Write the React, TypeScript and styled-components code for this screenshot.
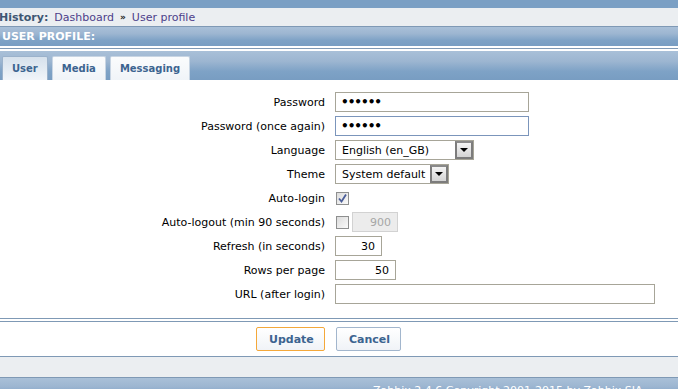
import React, { FC } from 'react';
import styled, { createGlobalStyle } from 'styled-components';

const GlobalStyle = createGlobalStyle`
  html, body {
    margin: 0;
    padding: 0;
    background: #ffffff;
    overflow: hidden;
  }
  body {
    font-family: "DejaVu Sans", Verdana, sans-serif;
    font-size: 11px;
    color: #000;
  }
`;

const blueGradient = 'linear-gradient(to bottom, #a9c0d8 0%, #9db6d1 35%, #7ea2c6 70%, #789dc2 100%)';

const SPage = styled.div`
  width: 678px;
  display: flex;
  flex-direction: column;
  & > * {
    flex-shrink: 0;
  }
`;

const STopBar = styled.div`
  height: 8px;
  background: #7a9fc4;
`;

const SHistory = styled.div`
  height: 18px;
  background: #ebeef1;
  border-bottom: 1px solid #7f99b5;
  display: flex;
  align-items: center;
  gap: 6px;
  white-space: nowrap;
`;

const SHistoryLabel = styled.span`
  font-weight: bold;
  color: #3e5673;
  margin-left: -1px;
`;

const SCrumb = styled.span`
  color: #4d3f8a;
`;

const SSep = styled.span`
  color: #222;
  font-size: 9px;
  font-weight: bold;
`;

const SHeader = styled.div`
  height: 19px;
  background: ${blueGradient};
  color: #fff;
  font-weight: bold;
  display: flex;
  align-items: center;
  padding-left: 2px;
`;

const SSpacerLine = styled.div`
  height: 5px;
  background: #fff;
  display: flex;
  align-items: center;
  &::after {
    content: '';
    display: block;
    width: 100%;
    height: 1px;
    margin-top: -1px;
    background: #7f99b5;
  }
`;

const STabBar = styled.div`
  height: 29px;
  background: ${blueGradient};
  display: flex;
  align-items: flex-end;
  gap: 4px;
  padding-left: 2px;
`;

const STab = styled.div<{ $active?: boolean }>`
  height: 24px;
  box-sizing: border-box;
  padding: 0 9px;
  display: flex;
  align-items: center;
  font-size: 10px;
  font-weight: bold;
  color: #3c6490;
  border: 1px solid ${({ $active }) => ($active ? '#9bb2cb' : '#c8d5e3')};
  border-bottom: none;
  border-radius: 2px 2px 0 0;
  background: ${({ $active }) =>
    $active
      ? 'linear-gradient(to bottom, #d6e1ec 0%, #e6edf4 60%, #f1f5f9 100%)'
      : 'linear-gradient(to bottom, #fbfcfd 0%, #f0f4f8 100%)'};
`;

const SForm = styled.div`
  display: grid;
  grid-template-columns: 325px 1fr;
  column-gap: 10px;
  grid-auto-rows: 24px;
  padding: 10px 0 12px;
`;

const SLabel = styled.div`
  text-align: right;
  align-self: center;
  white-space: nowrap;
`;

const SCell = styled.div`
  display: flex;
  align-items: center;
  gap: 3px;
`;

const SInput = styled.div<{ $w: number; $focus?: boolean; $right?: boolean; $disabled?: boolean }>`
  width: ${({ $w }) => $w}px;
  height: 20px;
  box-sizing: border-box;
  border: 1px solid ${({ $focus, $disabled }) => ($focus ? '#7b95bb' : $disabled ? '#d2d2d2' : '#a7a598')};
  background: ${({ $disabled }) => ($disabled ? '#ececec' : '#fff')};
  color: ${({ $disabled }) => ($disabled ? '#a6a6a6' : '#000')};
  display: flex;
  align-items: center;
  justify-content: ${({ $right }) => ($right ? 'flex-end' : 'flex-start')};
  padding: 0 6px 0 5px;
`;

const SDots = styled.span`
  font-size: 12px;
  font-weight: bold;
  letter-spacing: -1px;
`;

const SSelect = styled.div<{ $w: number }>`
  width: ${({ $w }) => $w}px;
  height: 20px;
  box-sizing: border-box;
  border: 1px solid #a7a598;
  display: flex;
  align-items: center;
  justify-content: space-between;
  padding-left: 6px;
  background: #fff;
`;

const SArrow = styled.div`
  width: 18px;
  height: 18px;
  box-sizing: border-box;
  border: 2px solid #7c7c7c;
  border-top-color: #8a8a8a;
  background: linear-gradient(to bottom, #f4f4f4, #d4d4d4);
  display: flex;
  align-items: center;
  justify-content: center;
  &::after {
    content: '';
    border-left: 4px solid transparent;
    border-right: 4px solid transparent;
    border-top: 4px solid #000;
  }
`;

const SCheckbox = styled.div`
  width: 13px;
  height: 13px;
  box-sizing: border-box;
  border: 1px solid #8e8f8f;
  background: linear-gradient(135deg, #dcdcdc, #fafafa);
  margin-left: 1px;
  display: flex;
  align-items: center;
  justify-content: center;
`;

const SFooterLines = styled.div`
  height: 4px;
  border-top: 1px solid #7f99b5;
  border-bottom: 1px solid #7f99b5;
  box-sizing: border-box;
`;

const SButtons = styled.div`
  display: grid;
  grid-template-columns: 325px 1fr;
  column-gap: 11px;
  padding: 5px 0 5px;
  border-bottom: 1px solid #7f99b5;
  align-items: center;
`;

const SButton = styled.button<{ $primary?: boolean }>`
  height: 24px;
  box-sizing: border-box;
  padding: 0 12px;
  font-family: "DejaVu Sans", Verdana, sans-serif;
  font-size: 11px;
  font-weight: bold;
  color: #3c6490;
  border: 1px solid ${({ $primary }) => ($primary ? '#f4a83a' : '#a2b6cd')};
  border-radius: 2px;
  background: linear-gradient(to bottom, #ffffff, #f0f3f7);
  justify-self: ${({ $primary }) => ($primary ? 'end' : 'start')};
  width: ${({ $primary }) => ($primary ? '69px' : '65px')};
`;

const SGrayBand = styled.div`
  height: 20px;
  background: #ebeef1;
  border-bottom: 1px solid #7f99b5;
`;

const SCopyright = styled.div`
  height: 24px;
  background: ${blueGradient};
  color: #fff;
  padding: 6px 0 0 373px;
  box-sizing: border-box;
  white-space: nowrap;
  font-size: 11px;
`;

const Check: FC = () => (
  <svg width="9" height="9" viewBox="0 0 9 9">
    <path d="M1 4.5 L3.5 7.5 L8 0.5" fill="none" stroke="#4b5e99" strokeWidth="1.8" />
  </svg>
);

const App: FC = () => (
  <>
    <GlobalStyle />
    <SPage>
      <STopBar />
      <SHistory>
        <SHistoryLabel>History:</SHistoryLabel>
        <SCrumb>Dashboard</SCrumb>
        <SSep>»</SSep>
        <SCrumb>User profile</SCrumb>
      </SHistory>
      <SHeader>USER PROFILE:</SHeader>
      <SSpacerLine />
      <STabBar>
        <STab $active>User</STab>
        <STab>Media</STab>
        <STab>Messaging</STab>
      </STabBar>
      <SForm>
        <SLabel>Password</SLabel>
        <SCell>
          <SInput $w={194}>
            <SDots>••••••</SDots>
          </SInput>
        </SCell>
        <SLabel>Password (once again)</SLabel>
        <SCell>
          <SInput $w={194} $focus>
            <SDots>••••••</SDots>
          </SInput>
        </SCell>
        <SLabel>Language</SLabel>
        <SCell>
          <SSelect $w={139}>
            English (en_GB)
            <SArrow />
          </SSelect>
        </SCell>
        <SLabel>Theme</SLabel>
        <SCell>
          <SSelect $w={114}>
            System default
            <SArrow />
          </SSelect>
        </SCell>
        <SLabel>Auto-login</SLabel>
        <SCell>
          <SCheckbox>
            <Check />
          </SCheckbox>
        </SCell>
        <SLabel>Auto-logout (min 90 seconds)</SLabel>
        <SCell>
          <SCheckbox />
          <SInput $w={46} $right $disabled>900</SInput>
        </SCell>
        <SLabel>Refresh (in seconds)</SLabel>
        <SCell>
          <SInput $w={47} $right>30</SInput>
        </SCell>
        <SLabel>Rows per page</SLabel>
        <SCell>
          <SInput $w={61} $right>50</SInput>
        </SCell>
        <SLabel>URL (after login)</SLabel>
        <SCell>
          <SInput $w={320} />
        </SCell>
      </SForm>
      <SFooterLines />
      <SButtons>
        <SButton $primary>Update</SButton>
        <SButton>Cancel</SButton>
      </SButtons>
      <SGrayBand />
      <SCopyright>Zabbix 2.4.6 Copyright 2001-2015 by Zabbix SIA</SCopyright>
    </SPage>
  </>
);

export default App;
